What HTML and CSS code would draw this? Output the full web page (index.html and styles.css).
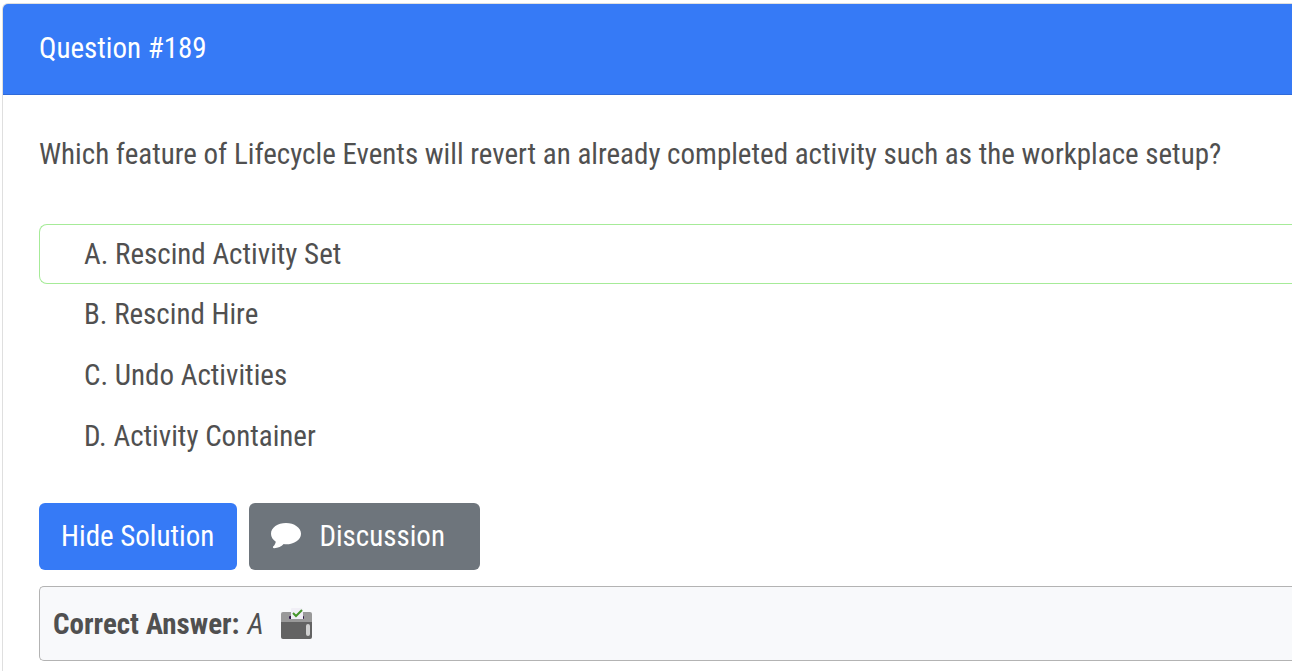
FILE: index.html
```
<!DOCTYPE html>
<html lang="en">
<head>
<meta charset="utf-8">
<title>Question #189</title>
<link rel="stylesheet" href="styles.css">
</head>
<body>
<main class="card">
  <header class="card-header">Question #189</header>
  <div class="card-body">
    <p class="question">Which feature of Lifecycle Events will revert an already completed activity such as the workplace setup?</p>
    <ul class="choices">
      <li class="choice correct">A. Rescind Activity Set</li>
      <li class="choice">B. Rescind Hire</li>
      <li class="choice">C. Undo Activities</li>
      <li class="choice">D. Activity Container</li>
    </ul>
    <div class="actions">
      <button class="btn primary" type="button">Hide Solution</button>
      <button class="btn secondary" type="button">
        <svg class="bubble" viewBox="0 0 30 26" aria-hidden="true"><path d="M15 0C6.700 0 0 4.700 0 10.700c0 3.200 1.800 6 4.800 8-.3 1.900-1.200 3.500-2.500 4.600-.8.800-.3 1.900.8 1.900 4.200-.3 7.200-1.600 9.600-4.100.8.100 1.500.2 2.300.2 8.300 0 15-4.700 15-10.600S23.300 0 15 0z"/></svg>
        <span>Discussion</span>
      </button>
    </div>
    <div class="answer">
      <strong>Correct Answer:</strong>
      <em>A</em>
      <svg class="vote" viewBox="0 0 32 32" aria-hidden="true">
        <path fill="#999" d="M2 4h27q2 0 2 2v9H0V6q0-2 2-2z"/>
        <rect x="8" y="8" width="15" height="3" rx="1" fill="#321a4a"/>
        <path fill="#f1eff6" d="M11 0h9q2 0 2 2v9H10V1q0-1 1-1z"/>
        <path fill="#636363" d="M0 14h31v15q0 2-2 2H2q-2 0-2-2z"/>
        <rect x="25" y="16" width="4" height="12" rx="2" fill="#d0d0d0"/>
        <path fill="none" stroke="#46962b" stroke-width="2" d="m12 5 3 3 6-6"/>
      </svg>
    </div>
  </div>
</main>
</body>
</html>
```
FILE: styles.css
```
* { box-sizing: border-box; }
body {
  margin: 0;
  background: #fff;
  color: #505050;
  font: 29px/42px "Roboto Condensed", Roboto, sans-serif;
}
.card {
  margin: 3px 0 0 2px;
  border: 1px solid #dfdfdf;
  border-width: 1px 0 0 1px;
  border-top-left-radius: 6px;
}
.card-header {
  padding: 23px 36px 25px;
  background: #367af6;
  border-bottom: 1px solid #2f6ad9;
  border-top-left-radius: 5px;
  color: #fff;
}
.card-body { padding: 38px 0 16px 36px; }
.question { margin: 0 0 49px; }
.choices { list-style: none; margin: 0 0 36px; padding: 0; }
.choice { padding: 9px 45px 10px; }
.correct {
  padding: 8px 44px;
  border: 1px solid #a6eb98;
  border-right: 0;
  border-radius: 8px 0 0 8px;
}
.actions { display: flex; flex-wrap: wrap; gap: 12px; margin-bottom: 16px; }
.btn {
  display: flex;
  align-items: center;
  gap: 18px;
  padding: 12px 22px 13px;
  border: 0;
  border-radius: 6px;
  font: inherit;
  color: #fff;
}
.primary { padding-right: 23px; background: #367af6; }
.secondary { padding-right: 35px; background: #6e757c; }
.bubble { width: 30px; height: 26px; fill: #fff; }
.answer {
  display: flex;
  align-items: center;
  gap: 8px;
  padding: 16px 13px 15px;
  background: #f8f9fb;
  border: 1px solid #b3b3b3;
  border-right: 0;
  border-radius: 5px 0 0 5px;
}
.vote { width: 32px; height: 32px; margin-left: 9px; }
```
